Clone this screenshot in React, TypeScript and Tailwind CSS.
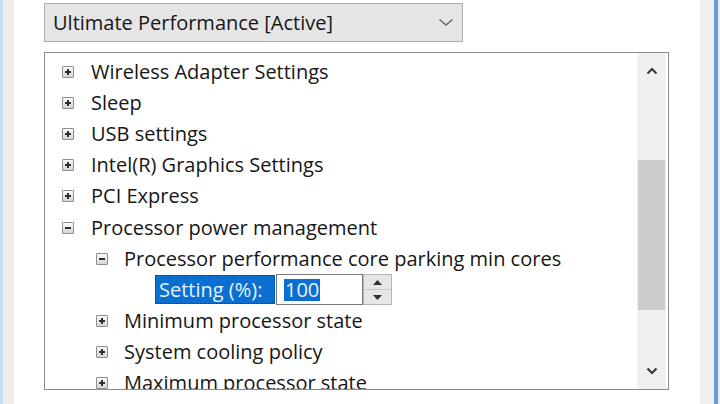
import React from "react";

function Box({ minus }: { minus?: boolean }) {
  return (
    <span className="relative flex shrink-0 w-[12px] h-[12px] border border-[#8e8e8e] rounded-[1px] bg-linear-to-b from-[#fbfbfb] to-[#d6d6d6] items-center justify-center">
      <span className="absolute w-[6px] h-[2px] bg-[#2e2e2e]" />
      {!minus && <span className="absolute w-[2px] h-[6px] bg-[#2e2e2e]" />}
    </span>
  );
}

function Row({ label, level, minus }: { label: string; level: 1 | 2; minus?: boolean }) {
  return (
    <div
      className={
        "flex items-center h-[31.2px] shrink-0 whitespace-nowrap " +
        (level === 1 ? "pl-[17px] gap-[17px]" : "pl-[51px] gap-[16px]")
      }
    >
      <Box minus={minus} />
      <span>{label}</span>
    </div>
  );
}

function Chevron({ up }: { up?: boolean }) {
  return (
    <svg width="12" height="8" viewBox="0 0 12 8">
      <path
        d={up ? "M1.5 6.5 L6 2 L10.5 6.5" : "M1.5 1.5 L6 6 L10.5 1.5"}
        fill="none"
        stroke="#3a3a3a"
        strokeWidth="2.2"
      />
    </svg>
  );
}

export default function App() {
  return (
    <div className="w-[720px] h-[404px] flex bg-white overflow-hidden font-['Open_Sans',sans-serif] text-[#161616] text-[20px]">
      <div className="w-[3px] bg-[#c9ddf1] shrink-0" />
      <div className="w-[11px] bg-[#efeaeb] shrink-0" />
      <div className="flex-1 flex flex-col pl-[30px] pt-[3px]">
        <div className="w-[419px] h-[39px] border border-[#adadad] bg-[#e5e5e5] flex items-center justify-between pl-[8px] pr-[8px]">
          <span className="whitespace-nowrap">Ultimate Performance [Active]</span>
          <svg width="16" height="9" viewBox="0 0 16 9">
            <path d="M1.5 1.5 L8 7 L14.5 1.5" fill="none" stroke="#6a6a6a" strokeWidth="1.6" />
          </svg>
        </div>
        <div className="mt-[10px] w-[625px] h-[338px] border border-[#8c8c8c] flex">
          <div className="flex-1 flex flex-col pt-[3px] overflow-hidden">
            <Row label="Wireless Adapter Settings" level={1} />
            <Row label="Sleep" level={1} />
            <Row label="USB settings" level={1} />
            <Row label="Intel(R) Graphics Settings" level={1} />
            <Row label="PCI Express" level={1} />
            <Row label="Processor power management" level={1} minus />
            <Row label="Processor performance core parking min cores" level={2} minus />
            <div className="flex items-center h-[31.2px] shrink-0 pl-[110px]">
              <div className="w-[120px] h-[29px] bg-[#0b6fd2] outline outline-1 outline-dotted outline-[#1d3a5c] -outline-offset-1 flex items-center pl-[4px] text-[#e3f1ff] whitespace-nowrap">
                Setting (%):
              </div>
              <div className="ml-[1px] w-[87px] h-[31px] border border-[#7a7a7a] bg-white flex items-center pl-[7px]">
                <span className="bg-[#0b6fd2] text-[#e3f1ff] leading-[22px] px-[1px]">100</span>
              </div>
              <div className="w-[29px] h-[31px] border border-[#b5b5b5] bg-[#e6e6e6] flex flex-col">
                <div className="flex-1 flex items-center justify-center border-b border-[#c8c8c8]">
                  <svg width="9" height="5" viewBox="0 0 9 5">
                    <path d="M0 5 L4.5 0 L9 5 Z" fill="#2e2e2e" />
                  </svg>
                </div>
                <div className="flex-1 flex items-center justify-center">
                  <svg width="9" height="5" viewBox="0 0 9 5">
                    <path d="M0 0 L4.5 5 L9 0 Z" fill="#2e2e2e" />
                  </svg>
                </div>
              </div>
            </div>
            <Row label="Minimum processor state" level={2} />
            <Row label="System cooling policy" level={2} />
            <Row label="Maximum processor state" level={2} />
          </div>
          <div className="w-[29px] mr-[2px] bg-[#f0f0f0] flex flex-col shrink-0">
            <div className="h-[36px] flex items-center justify-center shrink-0">
              <Chevron up />
            </div>
            <div className="h-[71px] shrink-0" />
            <div className="h-[150px] mx-[1px] bg-[#cdcdcd] shrink-0" />
            <div className="flex-1" />
            <div className="h-[36px] flex items-center justify-center shrink-0">
              <Chevron />
            </div>
          </div>
        </div>
      </div>
      <div className="w-[14px] bg-[#f0f0f0] shrink-0" />
      <div className="w-[4px] bg-[#6c9bd1] shrink-0" />
      <div className="w-[2px] bg-[#e6eef7] shrink-0" />
    </div>
  );
}
